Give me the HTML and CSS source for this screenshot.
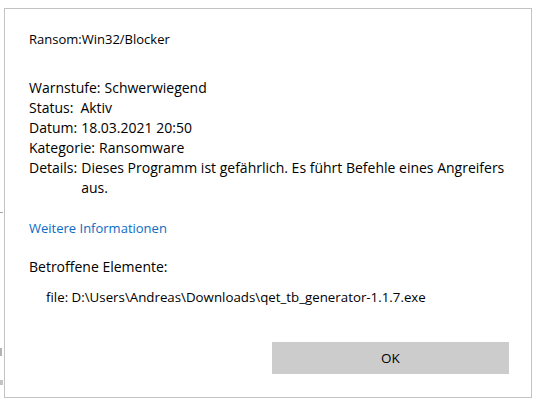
FILE: index.html
```html
<!DOCTYPE html>
<html lang="de">
<head>
<meta charset="utf-8">
<title>Ransom:Win32/Blocker</title>
<link rel="stylesheet" href="styles.css">
</head>
<body>
<div class="backdrop">
  <span class="mark mark-a"></span>
  <span class="mark mark-b"></span>
  <span class="mark mark-c"></span>
</div>
<div class="dialog">
  <div class="title">Ransom:Win32/Blocker</div>
  <div class="props">
    <div class="row"><span class="label">Warnstufe:</span><span class="value">Schwerwiegend</span></div>
    <div class="row"><span class="label">Status:</span><span class="value wide">Aktiv</span></div>
    <div class="row"><span class="label">Datum:</span><span class="value">18.03.2021 20:50</span></div>
    <div class="row"><span class="label">Kategorie:</span><span class="value">Ransomware</span></div>
    <div class="row"><span class="label">Details:</span><span class="value details">Dieses Programm ist gefährlich. Es führt Befehle eines Angreifers aus.</span></div>
  </div>
  <a class="more" href="#">Weitere Informationen</a>
  <div class="section">Betroffene Elemente:</div>
  <div class="file">file: D:\Users\Andreas\Downloads\qet_tb_generator-1.1.7.exe</div>
  <div class="actions"><button class="ok" type="button">OK</button></div>
</div>
</body>
</html>
```
FILE: styles.css
```css
html, body {
  margin: 0;
  padding: 0;
  background: #ffffff;
}
body {
  width: 537px;
  height: 401px;
  overflow: hidden;
  position: relative;
  font-family: "Segoe UI", "Open Sans", sans-serif;
  color: #000000;
}
.backdrop {
  position: absolute;
  left: 0;
  top: 0;
  width: 4px;
  height: 401px;
}
.mark {
  position: absolute;
  left: 0;
  display: block;
  background: #a8a8a8;
}
.mark-a { top: 212px; width: 3px; height: 1px; }
.mark-b { top: 348px; width: 2px; height: 8px; background: #b4b4b4; }
.mark-c { top: 380px; width: 3px; height: 5px; background: #c4c4c4; }
.dialog {
  position: absolute;
  left: 4px;
  top: 8px;
  box-sizing: border-box;
  width: 528px;
  height: 390px;
  border: 1px solid #c3c3c3;
  background: #ffffff;
  padding: 21px 22px 0 24px;
  display: flex;
  flex-direction: column;
}
.title {
  font-size: 13px;
  line-height: 18px;
}
.props {
  margin-top: 30px;
  font-size: 14px;
  line-height: 20px;
}
.row {
  display: flex;
}
.label {
  flex: none;
  margin-right: 4px;
}
.value.wide {
  margin-left: 3px;
}
.value.details {
  flex: 1;
}
.more {
  margin-top: 21px;
  font-size: 13px;
  line-height: 18px;
  color: #0a6cc4;
  text-decoration: none;
  align-self: flex-start;
}
.section {
  margin-top: 20px;
  font-size: 14px;
  line-height: 20px;
}
.file {
  margin-top: 11px;
  padding-left: 17px;
  font-size: 13.3px;
  line-height: 18px;
}
.actions {
  margin-top: auto;
  margin-bottom: 23px;
  display: flex;
  justify-content: flex-end;
}
.ok {
  width: 237px;
  height: 32px;
  border: none;
  background: #cccccc;
  font-family: inherit;
  font-size: 13.5px;
  color: #000000;
  padding: 0;
}
```
